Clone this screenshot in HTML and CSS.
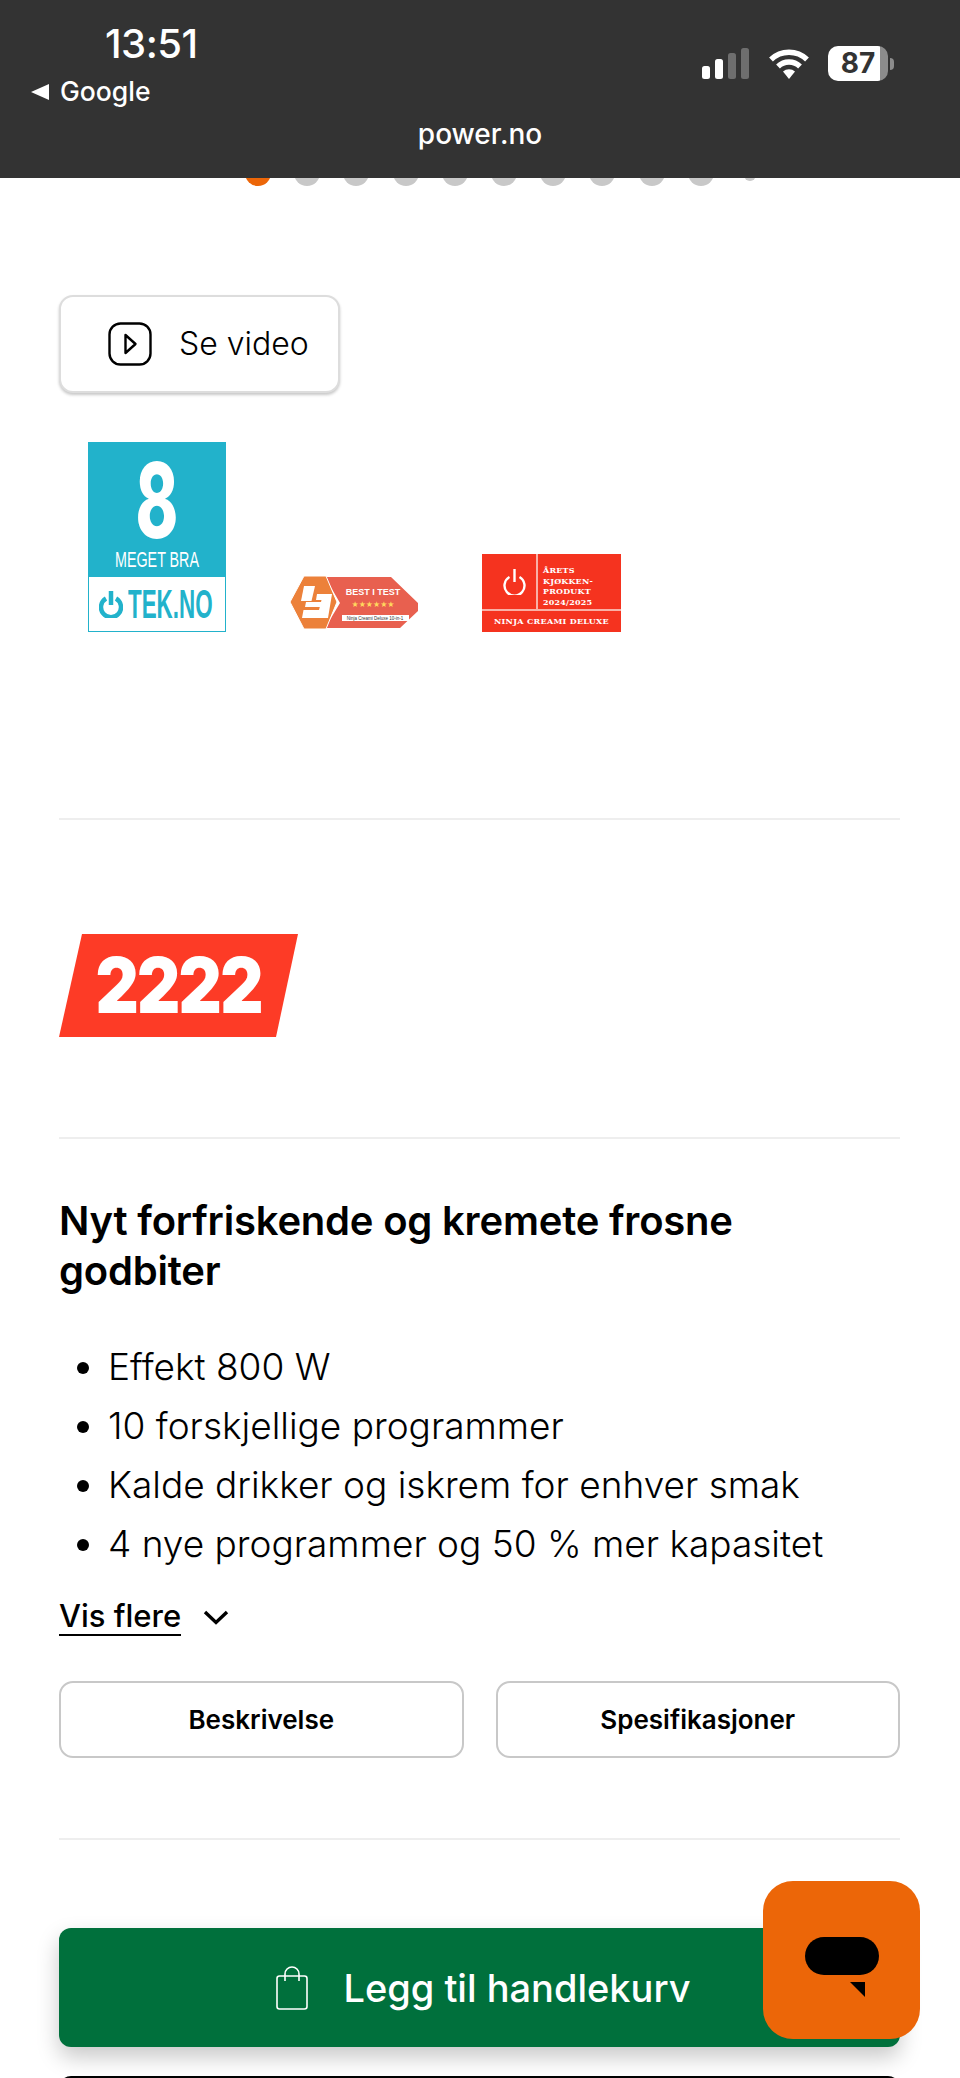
FILE: index.html
```html
<!DOCTYPE html>
<html lang="no">
  <head>
    <meta charset="UTF-8" />
    <meta name="viewport" content="width=device-width, initial-scale=1.0" />
    <title>Ninja Creami Deluxe - power.no</title>
    <link rel="stylesheet" href="styles.css">
  </head>
  <body>
    <header class="browser-bar">
      <div class="status-left">
        <div class="clock">13:51</div>
        <div class="back-link"><span class="back-arrow"></span>Google</div>
      </div>
      <div class="status-right">
        <svg class="signal" width="48" height="31" viewBox="0 0 48 31">
          <rect x="0" y="18" width="8" height="13" rx="2.5" fill="#fff" />
          <rect x="13" y="11" width="8" height="20" rx="2.5" fill="#fff" />
          <rect x="26" y="5" width="8" height="26" rx="2.5" fill="#6e6e6e" />
          <rect x="39" y="0" width="8" height="31" rx="2.5" fill="#6e6e6e" />
        </svg>
        <svg class="wifi" width="42" height="31" viewBox="0 0 42 31">
          <path d="M3 11.5 A26 26 0 0 1 39 11.5" fill="none" stroke="#fff" stroke-width="5.5" />
          <path d="M10 18.5 A16 16 0 0 1 32 18.5" fill="none" stroke="#fff" stroke-width="5.5" />
          <path d="M15 23.5 A9 9 0 0 1 27 23.5 L21 31 Z" fill="#fff" />
        </svg>
        <div class="battery">
          <div class="battery-body">87</div>
          <div class="battery-nub"></div>
        </div>
      </div>
      <div class="address">power.no</div>
    </header>

    <main class="page">
      <div class="dots">
        <span class="dot dot-active"></span>
        <span class="dot"></span>
        <span class="dot"></span>
        <span class="dot"></span>
        <span class="dot"></span>
        <span class="dot"></span>
        <span class="dot"></span>
        <span class="dot"></span>
        <span class="dot"></span>
        <span class="dot"></span>
        <span class="dot dot-small"></span>
      </div>

      <button class="video-btn" type="button">
        <svg width="44" height="44" viewBox="0 0 44 44" fill="none" stroke="#000" stroke-width="2.4">
          <rect x="1.5" y="1.5" width="41" height="41" rx="11" />
          <path d="M17.5 13 L27.5 22 L17.5 31 Z" stroke-linejoin="round" />
        </svg>
        <span>Se video</span>
      </button>

      <div class="awards">
        <div class="tek-badge">
          <div class="tek-top">
            <div class="tek-score">8</div>
            <div class="tek-label">MEGET BRA</div>
          </div>
          <div class="tek-bottom">
            <svg width="24" height="28" viewBox="0 0 24 28" fill="none" stroke="#22b2cb" stroke-width="4.5">
              <path d="M7 8.5 A10 10 0 1 0 17 8.5" />
              <path d="M12 1 V15" />
            </svg>
            <span class="tek-name">TEK.NO</span>
          </div>
        </div>

        <svg class="lb-badge" width="128" height="53" viewBox="0 0 128 53">
          <path d="M35 1 H101 L128 27 V35 L110 52 H35 L50 27 Z" fill="#e8604f" />
          <path d="M14 0 H36 L47 26 L36 53 H14 L0 26 Z" fill="#ec813a" stroke="#fff" stroke-width="1" />
          <path d="M14 10 H25 L21.5 25 H11 Z" fill="#fff" />
          <path d="M27 18 H42 L38 42 H12 L13.5 34 H29 L29.8 31 H15 L16 26 H31 L31.5 24 H26 Z" fill="#fff" />
          <text x="83" y="19" class="lb-title">BEST I TEST</text>
          <text x="83" y="31" class="lb-stars">★★★★★★</text>
          <rect x="52" y="39" width="67" height="6" fill="#fff" />
          <text x="85" y="44" class="lb-model">Ninja Creami Deluxe 10-in-1</text>
        </svg>

        <div class="kitchen-badge">
          <div class="kitchen-top">
            <div class="kitchen-icon">
              <svg width="23" height="26" viewBox="0 0 23 26" fill="none" stroke="#fff" stroke-width="2.4">
                <path d="M6.5 8 A10 10 0 1 0 16.5 8" />
                <path d="M11.5 0 V13" />
              </svg>
            </div>
            <div class="kitchen-title">ÅRETS<br />KJØKKEN-<br />PRODUKT<br />2024/2025</div>
          </div>
          <div class="kitchen-name">NINJA CREAMI DELUXE</div>
        </div>
      </div>

      <hr class="divider divider-awards" />

      <div class="price-tag"><span class="price-digits">2222</span></div>

      <hr class="divider divider-price" />

      <h2 class="title">Nyt forfriskende og kremete frosne godbiter</h2>
      <ul class="features">
        <li>Effekt 800 W</li>
        <li>10 forskjellige programmer</li>
        <li>Kalde drikker og iskrem for enhver smak</li>
        <li>4 nye programmer og 50 % mer kapasitet</li>
      </ul>

      <a class="more-link" href="#">
        <span class="more-text">Vis flere</span>
        <svg width="26" height="15" viewBox="0 0 26 15" fill="none" stroke="#000" stroke-width="3.4">
          <path d="M2 2 L13 12.5 L24 2" />
        </svg>
      </a>

      <div class="tabs">
        <button class="tab" type="button">Beskrivelse</button>
        <button class="tab" type="button">Spesifikasjoner</button>
      </div>

      <hr class="divider divider-tabs" />

      <button class="buy-btn" type="button">
        <svg width="32" height="44" viewBox="0 0 32 44" fill="none" stroke="#fff" stroke-width="1.6">
          <rect x="1" y="10" width="30" height="33" rx="2.5" />
          <path d="M9 15 V8 A7 7 0 0 1 23 8 V15" />
        </svg>
        <span>Legg til handlekurv</span>
      </button>
      <div class="next-btn"></div>
    </main>

    <div class="chat-btn">
      <div class="chat-bubble"></div>
      <div class="chat-tail"></div>
    </div>
  </body>
</html>
```

FILE: styles.css
```css
html,
body {
  margin: 0;
  padding: 0;
  height: 2078px;
  overflow: hidden;
  background-color: #ffffff;
}
body {
  position: relative;
  font-family: Inter, "Open Sans", sans-serif;
  color: #000000;
}
button {
  font-family: inherit;
  cursor: pointer;
}

/* browser chrome on top of the page */
.browser-bar {
  position: absolute;
  top: 0;
  left: 0;
  right: 0;
  z-index: 2;
  height: 178px;
  background-color: #333333;
  color: #ffffff;
  font-family: Inter, "Liberation Sans", sans-serif;
}
.status-left {
  position: absolute;
  top: 21px;
  left: 31px;
}
.clock {
  margin-left: 74px;
  font-size: 40px;
  line-height: 46px;
  font-weight: 500;
  letter-spacing: -0.5px;
}
.back-link {
  display: flex;
  align-items: center;
  margin-top: 9px;
  font-size: 26.5px;
  line-height: 31px;
  font-weight: 500;
}
.back-arrow {
  width: 0;
  height: 0;
  margin-right: 11px;
  border-top: 8px solid transparent;
  border-bottom: 8px solid transparent;
  border-right: 18px solid #ffffff;
}
.status-right {
  position: absolute;
  top: 46px;
  left: 702px;
  display: flex;
  align-items: center;
  gap: 18px;
}
.battery {
  display: flex;
  align-items: center;
}
.battery-body {
  width: 60px;
  height: 35px;
  border-radius: 10px;
  background: linear-gradient(to right, #ffffff 87%, #8c8c8c 87%);
  color: #333333;
  font-size: 28px;
  font-weight: 700;
  line-height: 35px;
  text-align: center;
}
.battery-nub {
  width: 4px;
  height: 12px;
  margin-left: 2px;
  border-radius: 0 4px 4px 0;
  background-color: #8c8c8c;
}
.address {
  position: absolute;
  top: 117px;
  left: 0;
  right: 0;
  font-size: 28px;
  line-height: 34px;
  font-weight: 500;
  text-align: center;
}

.page {
  padding: 160px 60px 0 59px;
}
.dots {
  display: flex;
  align-items: flex-start;
  gap: 23.2px;
  height: 26px;
  margin-left: 186px;
}
.dot {
  width: 26px;
  height: 26px;
  border-radius: 50%;
  background-color: #c8c8c8;
}
.dot-active {
  background-color: #ec6608;
}
.dot-small {
  width: 12px;
  height: 12px;
  margin: 9px 0 0 7px;
}

.video-btn {
  display: flex;
  align-items: center;
  gap: 27px;
  width: 281px;
  height: 98px;
  margin-top: 109px;
  padding: 0 0 0 47px;
  border: 2px solid #dddddd;
  border-radius: 14px;
  background-color: #ffffff;
  box-shadow: 0 2px 3px rgba(0, 0, 0, 0.22);
  color: #000000;
  font-size: 32px;
  font-weight: 300;
}
.video-btn span {
  padding-bottom: 1px;
}

.awards {
  display: flex;
  align-items: flex-end;
  height: 190px;
  margin: 49px 0 0 29px;
}
.tek-badge {
  display: flex;
  flex-direction: column;
  width: 138px;
  height: 190px;
  box-sizing: border-box;
  border: 1px solid #22b2cb;
  margin-right: 64px;
}
.tek-top {
  height: 134px;
  background-color: #22b2cb;
  color: #ffffff;
  text-align: center;
}
.tek-score {
  font-family: Inter, sans-serif;
  font-size: 104px;
  font-weight: 800;
  line-height: 84px;
  padding-top: 15px;
  transform: scaleX(0.62);
}
.tek-label {
  margin-top: 5px;
  font-family: "Liberation Sans", Arial, sans-serif;
  font-size: 22px;
  line-height: 26px;
  white-space: nowrap;
  transform: scaleX(0.65);
}
.tek-bottom {
  display: flex;
  align-items: center;
  justify-content: center;
  flex: 1;
  gap: 5px;
  color: #22b2cb;
}
.tek-name {
  display: inline-block;
  width: 88px;
  font-family: "Liberation Sans", Arial, sans-serif;
  font-size: 40px;
  font-weight: 700;
  white-space: nowrap;
  transform: scaleX(0.56);
  transform-origin: left center;
}
.lb-badge {
  margin: 0 64px 3px 0;
}
.lb-title {
  font-family: "Liberation Sans", Arial, sans-serif;
  font-size: 9px;
  font-weight: 700;
  fill: #ffffff;
  text-anchor: middle;
}
.lb-stars {
  font-family: "DejaVu Sans", sans-serif;
  font-size: 8px;
  fill: #ffd75e;
  text-anchor: middle;
}
.lb-model {
  font-family: "Liberation Sans", Arial, sans-serif;
  font-size: 4.5px;
  fill: #333333;
  text-anchor: middle;
}
.kitchen-badge {
  width: 139px;
  height: 78px;
  background-color: #f5331f;
  color: #ffffff;
  font-family: "DejaVu Serif", "Liberation Serif", serif;
  font-weight: 700;
}
.kitchen-top {
  display: flex;
  height: 55px;
  border-bottom: 2px solid #f9b0a6;
}
.kitchen-icon {
  display: flex;
  align-items: center;
  justify-content: center;
  box-sizing: border-box;
  width: 56px;
  padding-left: 11px;
  border-right: 2px solid #f9b0a6;
}
.kitchen-title {
  padding: 11px 0 0 5px;
  font-size: 8px;
  line-height: 10.5px;
  letter-spacing: 0.2px;
}
.kitchen-name {
  font-size: 8px;
  line-height: 21px;
  letter-spacing: 0.3px;
  text-align: center;
  white-space: nowrap;
}

.divider {
  height: 2px;
  margin: 0;
  border: none;
  background-color: #eeeeee;
}
.divider-awards {
  margin-top: 186px;
}
.divider-price {
  margin-top: 100px;
}
.divider-tabs {
  margin-top: 80px;
}

.price-tag {
  width: 239px;
  height: 103px;
  margin-top: 114px;
  background-color: #fd3b26;
  clip-path: polygon(23px 0, 100% 0, 217px 100%, 0 100%);
  color: #ffffff;
  font-size: 77px;
  font-weight: 900;
  line-height: 103px;
  letter-spacing: -2px;
  text-align: center;
}
.price-digits {
  display: inline-block;
  transform: scaleX(0.87);
}

.title {
  width: 700px;
  margin: 57px 0 0;
  font-size: 40px;
  font-weight: 600;
  line-height: 50px;
  letter-spacing: -0.2px;
}
.features {
  margin: 41px 0 0;
  padding: 0 0 0 49px;
  font-size: 37px;
  line-height: 59px;
  font-weight: 300;
}
.more-link {
  display: flex;
  align-items: center;
  gap: 22px;
  height: 40px;
  margin-top: 24px;
  color: #000000;
  font-size: 31px;
  font-weight: 500;
  text-decoration: none;
}
.more-text {
  border-bottom: 2px solid #000000;
  line-height: 36px;
}
.tabs {
  display: flex;
  gap: 32px;
  margin-top: 44px;
}
.tab {
  flex: 1;
  height: 77px;
  border: 2px solid #c8c8c8;
  border-radius: 14px;
  background-color: #ffffff;
  color: #000000;
  font-size: 26px;
  font-weight: 600;
}

.buy-btn {
  display: flex;
  align-items: center;
  justify-content: center;
  gap: 35px;
  width: 100%;
  height: 119px;
  margin-top: 88px;
  padding-left: 14px;
  border: none;
  border-radius: 12px;
  background-color: #00703c;
  box-shadow: 0 10px 22px rgba(0, 0, 0, 0.22);
  color: #ffffff;
  font-size: 38px;
  font-weight: 500;
}
.next-btn {
  height: 30px;
  margin-top: 29px;
  border-radius: 12px;
  background-color: #000000;
}

/* floating chat button */
.chat-btn {
  position: absolute;
  top: 1881px;
  left: 763px;
  z-index: 3;
  width: 157px;
  height: 158px;
  border-radius: 30px;
  background-color: #ec6608;
}
.chat-bubble {
  position: absolute;
  top: 56px;
  left: 42px;
  width: 74px;
  height: 38px;
  border-radius: 19px;
  background-color: #000000;
}
.chat-tail {
  position: absolute;
  top: 101px;
  left: 87px;
  width: 15px;
  height: 15px;
  background-color: #000000;
  clip-path: polygon(0 0, 100% 0, 100% 100%);
}
```
